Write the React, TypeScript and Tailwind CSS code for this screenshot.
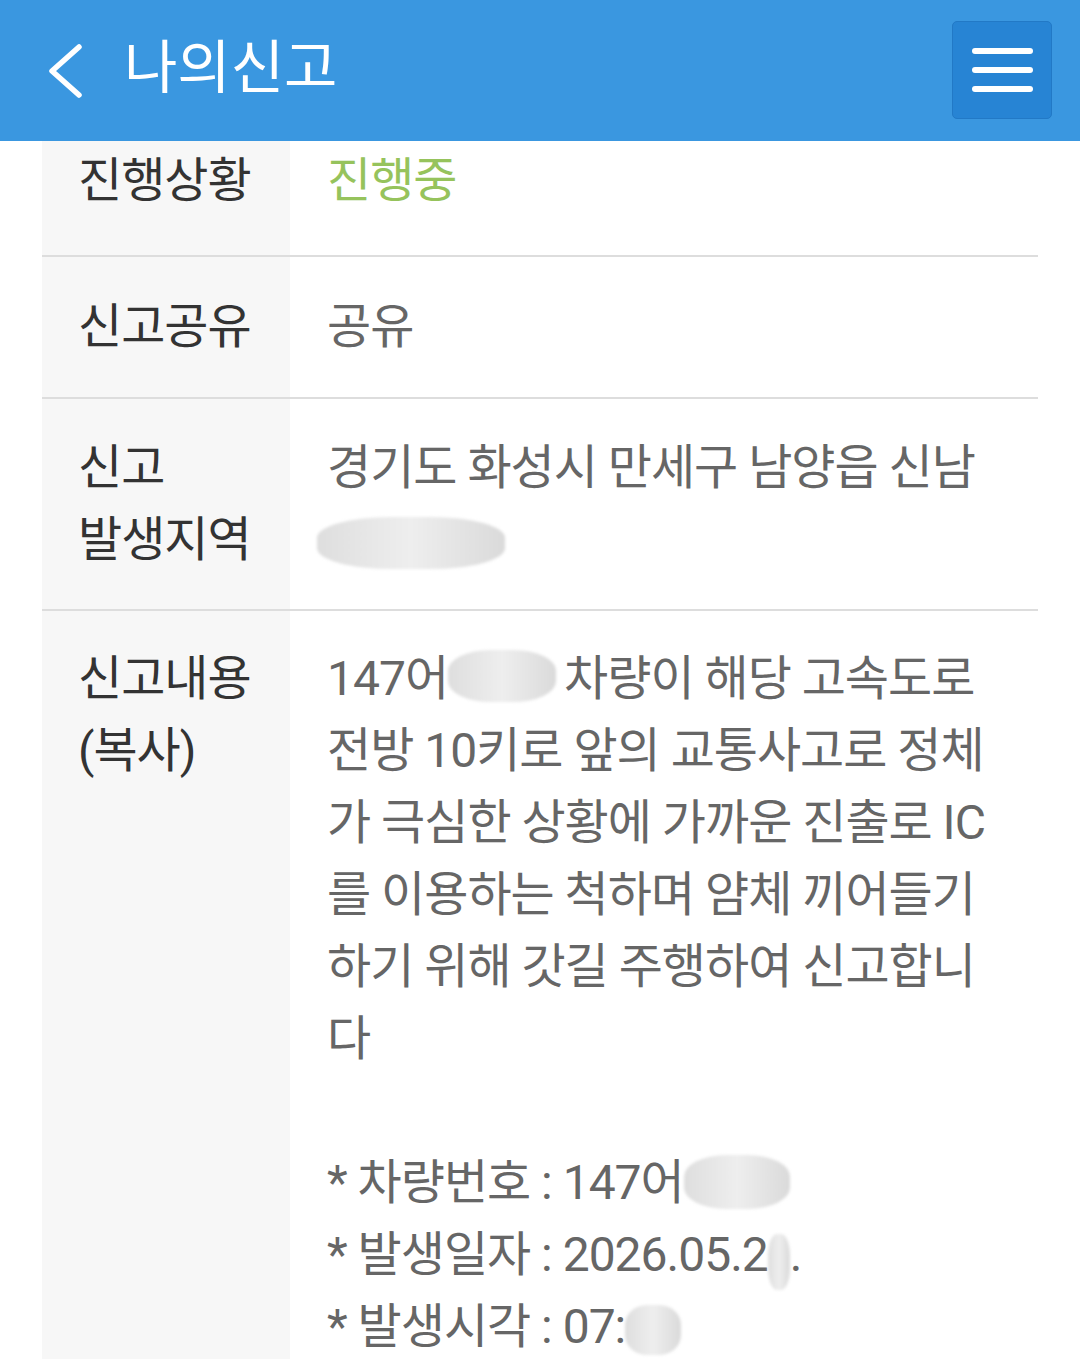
import React from "react";

const Blur: React.FC<{ w: number; h: number; className?: string }> = ({ w, h, className }) => (
  <span
    className={
      "inline-block align-middle rounded-[40%] bg-gradient-to-r from-[#dedede] via-[#eeeeee] to-[#dadada] blur-[1.5px] " +
      (className ?? "")
    }
    style={{ width: w, height: h }}
  />
);

const Row: React.FC<{ label: React.ReactNode; children: React.ReactNode; className?: string; last?: boolean }> = ({
  label,
  children,
  className,
  last,
}) => (
  <div className={"flex " + (last ? "" : "border-b-2 border-[#dddddd]")}>
    <div className={"w-[248px] shrink-0 bg-[#f7f7f7] pl-[36px] text-[#333333] " + (className ?? "")}>{label}</div>
    <div className={"flex-1 pl-[37px] text-[#666666] " + (className ?? "")}>{children}</div>
  </div>
);

export default function App() {
  return (
    <div className="min-h-screen bg-white font-['Roboto','Noto_Sans_CJK_KR',sans-serif]">
      <header className="h-[141px] bg-[#3a97e0] flex items-center pl-[46px] pr-[28px]">
        <svg width="38" height="54" viewBox="0 0 38 54" className="mr-[40px]">
          <polyline points="33,3 6,27 33,51" fill="none" stroke="white" strokeWidth="5.5" strokeLinecap="round" strokeLinejoin="round" />
        </svg>
        <h1 className="flex-1 text-white text-[58px] tracking-[0px] leading-none -mt-[6px]">나의신고</h1>
        <button className="w-[100px] h-[98px] -mt-[2px] rounded-[5px] bg-[#2784d4] border border-[#2279c6] flex flex-col items-center justify-center gap-[13px]">
          <span className="w-[61px] h-[6px] rounded-full bg-white" />
          <span className="w-[61px] h-[6px] rounded-full bg-white" />
          <span className="w-[61px] h-[6px] rounded-full bg-white" />
        </button>
      </header>

      <main className="px-[42px] text-[48px] leading-[72px] tracking-[-1px]">
        <Row label="진행상황" className="pt-[4px] pb-[38px]">
          <span className="text-[#96c35c]">진행중</span>
        </Row>
        <Row label="신고공유" className="py-[34px]">
          공유
        </Row>
        <Row
          label={
            <>
              <div>신고</div>
              <div>발생지역</div>
            </>
          }
          className="py-[33px]"
        >
          <div className="whitespace-nowrap">경기도 화성시 만세구 남양읍 신남</div>
          <div className="whitespace-nowrap -ml-[10px]">
            <Blur w={188} h={52} />
          </div>
        </Row>
        <Row
          last
          label={
            <>
              <div>신고내용</div>
              <div>(복사)</div>
            </>
          }
          className="pt-[32px] pb-[40px]"
        >
          <div className="whitespace-nowrap">
            147어<Blur w={108} h={52} className="-translate-y-[6px] mr-[8px]" />차량이 해당 고속도로
          </div>
          <div className="whitespace-nowrap">전방 10키로 앞의 교통사고로 정체</div>
          <div className="whitespace-nowrap">가 극심한 상황에 가까운 진출로 IC</div>
          <div className="whitespace-nowrap">를 이용하는 척하며 얌체 끼어들기</div>
          <div className="whitespace-nowrap">하기 위해 갓길 주행하여 신고합니</div>
          <div className="whitespace-nowrap">다</div>
          <div className="h-[72px]" />
          <div className="whitespace-nowrap">
            * 차량번호 : 147어<Blur w={106} h={54} className="-translate-y-[4px]" />
          </div>
          <div className="whitespace-nowrap">
            * 발생일자 : 2026.05.2<Blur w={22} h={56} className="translate-y-[4px]" />.
          </div>
          <div className="whitespace-nowrap">
            * 발생시각 : 07:<Blur w={56} h={50} />
          </div>
        </Row>
      </main>
    </div>
  );
}
